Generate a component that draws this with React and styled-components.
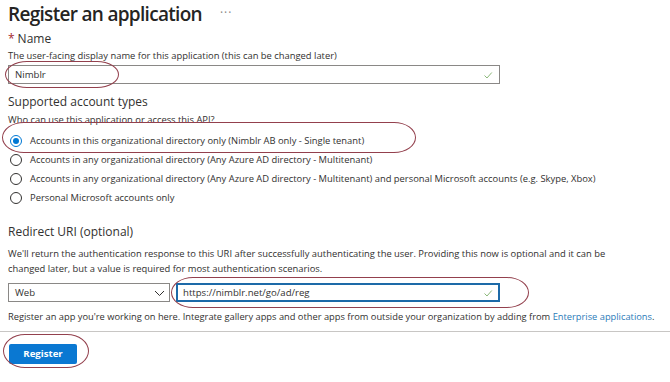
import React from "react";
import styled, { createGlobalStyle } from "styled-components";

const GlobalStyle = createGlobalStyle`
  body {
    margin: 0;
    background: #ffffff;
    font-family: "Open Sans", "Noto Sans", sans-serif;
    color: #323130;
  }
`;

const Page = styled.div`
  width: 670px;
  height: 382px;
  overflow: hidden;
  padding: 0 0 0 8px;
  box-sizing: border-box;
`;

const TitleRow = styled.div`
  display: flex;
  align-items: center;
  gap: 18px;
  height: 27px;
`;

const Title = styled.h1`
  margin: 0;
  font-size: 19px;
  font-weight: 600;
  letter-spacing: -0.7px;
  color: #252423;
`;

const Dots = styled.span`
  font-size: 12px;
  color: #8a8886;
  letter-spacing: 1px;
  margin-top: -2px;
`;

const Label = styled.div`
  font-size: 12px;
  margin-top: ${(p) => p.$top || 0}px;
  line-height: 18px;
`;

const Star = styled.span`
  color: #a4262c;
  margin-right: 3px;
`;

const Hint = styled.div`
  font-size: 9.4px;
  line-height: 15px;
  margin-top: ${(p) => p.$top || 0}px;
  white-space: nowrap;
`;

const Annotated = styled.div`
  position: relative;
  width: ${(p) => p.$w}px;
`;

const Ellipse = styled.span`
  position: absolute;
  left: ${(p) => p.$l}px;
  top: ${(p) => p.$t}px;
  width: ${(p) => p.$w}px;
  height: ${(p) => p.$h}px;
  border: 1px solid #93404d;
  border-radius: 22px / 50%;
  pointer-events: none;
`;

const Input = styled.div`
  display: flex;
  align-items: center;
  justify-content: space-between;
  box-sizing: border-box;
  height: 19px;
  width: ${(p) => p.$w}px;
  border: 1px solid ${(p) => (p.$focus ? "#1d6aa8" : "#8a8886")};
  box-shadow: ${(p) => (p.$focus ? "inset 0 0 0 1px #1d6aa8" : "none")};
  padding: 0 6px 0 6px;
  font-size: 9.6px;
  color: #323130;
`;

const Radios = styled.div`
  display: flex;
  flex-direction: column;
  gap: 4px;
  margin-top: 6px;
`;

const RadioRow = styled.div`
  display: flex;
  align-items: center;
  gap: 8px;
  height: 15px;
  font-size: 9.4px;
  white-space: nowrap;
`;

const RadioDot = styled.span`
  width: 12px;
  height: 12px;
  box-sizing: border-box;
  border-radius: 50%;
  border: 1px solid ${(p) => (p.$on ? "#0078d4" : "#323130")};
  display: flex;
  align-items: center;
  justify-content: center;
  flex: none;
  margin-left: 2px;
  &::after {
    content: "";
    width: 6px;
    height: 6px;
    border-radius: 50%;
    background: ${(p) => (p.$on ? "#0078d4" : "transparent")};
  }
`;

const UriRow = styled.div`
  display: flex;
  gap: 6px;
  margin-top: 7px;
`;

const Select = styled(Input)`
  padding-right: 4px;
`;

const Note = styled.div`
  font-size: 9.3px;
  line-height: 15px;
  margin-top: 7px;
  white-space: nowrap;
`;

const Link = styled.span`
  color: #2b7bb9;
`;

const Rule = styled.hr`
  border: none;
  border-top: 1px solid #c8c6c4;
  margin: 7px 0 0 -8px;
`;

const ButtonWrap = styled.div`
  position: relative;
  margin-top: 8px;
  margin-left: 1px;
  width: 68px;
`;

const Button = styled.button`
  width: 68px;
  height: 20px;
  border: none;
  border-radius: 2px;
  background: #0a78d2;
  color: #ffffff;
  font-family: inherit;
  font-size: 9.6px;
  font-weight: 700;
  padding: 0;
`;

const Check = () => (
  <svg width="10" height="10" viewBox="0 0 10 10">
    <path d="M1.5 5.5 L4 8 L8.8 2.5" fill="none" stroke="#8cb87a" strokeWidth="1" />
  </svg>
);

const Chevron = () => (
  <svg width="11" height="10" viewBox="0 0 11 10">
    <path d="M1 3 L5.5 7.5 L10 3" fill="none" stroke="#323130" strokeWidth="1" />
  </svg>
);

const accountTypes = [
  "Accounts in this organizational directory only (Nimblr AB only - Single tenant)",
  "Accounts in any organizational directory (Any Azure AD directory - Multitenant)",
  "Accounts in any organizational directory (Any Azure AD directory - Multitenant) and personal Microsoft accounts (e.g. Skype, Xbox)",
  "Personal Microsoft accounts only",
];

export default function App() {
  return (
    <>
      <GlobalStyle />
      <Page>
        <TitleRow>
          <Title>Register an application</Title>
          <Dots>···</Dots>
        </TitleRow>

        <Label $top={3}>
          <Star>*</Star>Name
        </Label>
        <Hint>The user-facing display name for this application (this can be changed later)</Hint>
        <Annotated $w={492} style={{ marginTop: 2 }}>
          <Input $w={492}>
            <span>Nimblr</span>
            <Check />
          </Input>
          <Ellipse $l={-3} $t={-4} $w={112} $h={25} />
        </Annotated>

        <Label $top={9}>Supported account types</Label>
        <Hint $top={1}>Who can use this application or access this API?</Hint>
        <Radios>
          {accountTypes.map((t, i) => (
            <Annotated key={t} $w={600}>
              <RadioRow>
                <RadioDot $on={i === 0} />
                {t}
              </RadioRow>
              {i === 0 && <Ellipse $l={-6} $t={-11} $w={412} $h={29} />}
            </Annotated>
          ))}
        </Radios>

        <Label $top={18}>Redirect URI (optional)</Label>
        <Hint $top={5}>
          We'll return the authentication response to this URI after successfully authenticating the user. Providing this now is optional and it can be
          <br />
          changed later, but a value is required for most authentication scenarios.
        </Hint>
        <UriRow>
          <Select $w={162}>
            <span>Web</span>
            <Chevron />
          </Select>
          <Annotated $w={324}>
            <Input $w={324} $focus>
              <span>https://nimblr.net/go/ad/reg</span>
              <Check />
            </Input>
            <Ellipse $l={-5} $t={-6} $w={356} $h={29} />
          </Annotated>
        </UriRow>
        <Note>
          Register an app you're working on here. Integrate gallery apps and other apps from outside your organization by adding from{" "}
          <Link>Enterprise applications</Link>.
        </Note>
        <Rule />
        <ButtonWrap>
          <Button>Register</Button>
          <Ellipse $l={-6} $t={-6} $w={84} $h={32} />
        </ButtonWrap>
      </Page>
    </>
  );
}
